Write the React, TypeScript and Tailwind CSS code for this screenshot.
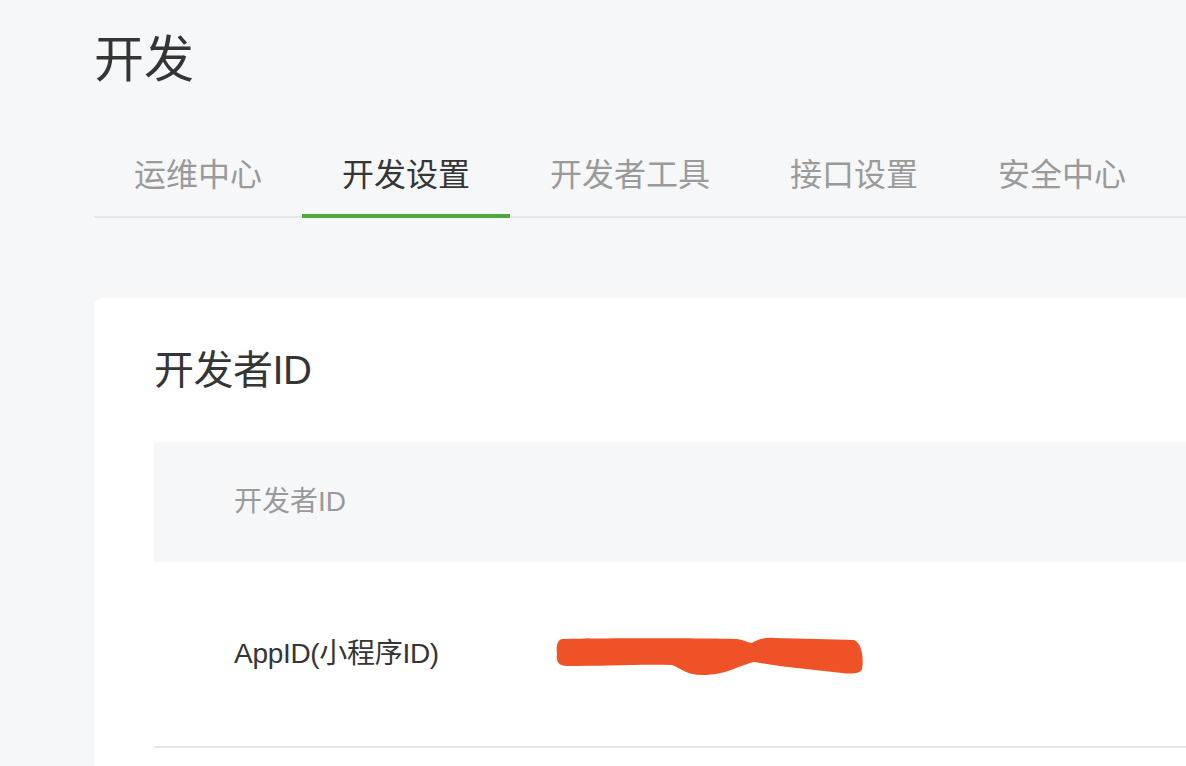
const tabs = ["运维中心", "开发设置", "开发者工具", "接口设置", "安全中心"];

const Scribble = () => (
  <svg
    viewBox="552 632 312 46"
    className="w-[312px] h-[46px]"
    aria-hidden="true"
  >
    <path
      d="M560 640 C600 639 700 639 735 640 C742 641 747 644 750 644 C755 641 762 638 772 639 C800 640 830 640 852 641 C860 644 862 660 860 670 C858 675 850 675 840 674 C810 671 780 668 752 663 C735 667 725 676 700 676 C685 676 680 670 670 666 C640 665 600 667 565 667 C556 667 554 662 555 655 C554 648 555 641 560 640 Z"
      fill="#f05227"
    />
  </svg>
);

const App = () => {
  return (
    <div className="w-full h-[766px] overflow-hidden bg-[#f6f7f9] font-[family-name:'Liberation_Sans','Noto_Sans_CJK_SC',sans-serif]">
      <div className="w-[1260px] pl-[94px] pt-[36px]">
        <h1 className="text-[50px] leading-[48px] font-normal text-[#353535]">
          开发
        </h1>

        {/* tabs */}
        <div className="mt-[75px] flex border-b-2 border-[#e7e7eb]">
          {tabs.map((t, i) => (
            <div
              key={t}
              className={
                i === 1
                  ? "px-[40px] pb-[23px] -mb-[2px] border-b-4 border-[#4fa93b] text-[32px] leading-[32px] text-[#353535]"
                  : "px-[40px] pb-[23px] -mb-[2px] border-b-4 border-transparent text-[32px] leading-[32px] text-[#9a9a9a]"
              }
            >
              {t}
            </div>
          ))}
        </div>

        {/* card */}
        <div className="mt-[80px] bg-white rounded-[8px] pl-[60px] pt-[52px] pb-[40px]">
          <h2 className="text-[40px] leading-[40px] font-normal text-[#353535] tracking-[-0.5px]">
            开发者ID
          </h2>
          <div className="mt-[52px]">
            <div className="h-[120px] bg-[#f6f7f9] flex items-center pl-[80px] text-[28px] text-[#9a9a9a]">
              开发者ID
            </div>
            <div className="h-[186px] flex items-center border-b-2 border-[#e7e7eb]">
              <div className="w-[400px] pl-[80px] text-[28px] text-[#353535] tracking-[-0.3px]">
                AppID(小程序ID)
              </div>
              <Scribble />
            </div>
          </div>
        </div>
      </div>
    </div>
  );
};

export default App;
